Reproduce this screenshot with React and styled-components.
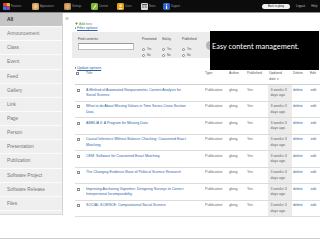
import React from "react";
import styled, { createGlobalStyle } from "styled-components";

const Global = createGlobalStyle`
  html, body { margin: 0; padding: 0; background: #fff; }
  body { width: 320px; height: 240px; overflow: hidden; font-family: "Liberation Sans", Arial, sans-serif; }
  * { box-sizing: border-box; }
`;

const Frame = styled.div`
  position: relative;
  width: 320px;
  height: 239px;
  overflow: hidden;
  background: #fff;
  border-bottom: 1px solid #cfcfcf;
`;

const TopBar = styled.div`
  height: 12px;
  background: #0c0c0c;
  display: flex;
  align-items: center;
  padding-left: 3px;
  padding-right: 0;
`;

const NavItem = styled.div`
  position: relative;
  display: flex;
  align-items: center;
  gap: 1px;
  width: ${(p) => p.$w}px;
  flex: none;
`;

const NavIcon = styled.div`
  width: 7px;
  height: 7px;
  border-radius: 1px;
  flex: none;
  overflow: hidden;
  display: flex;
`;

const NavLabel = styled.span`
  font-size: 2.6px;
  color: #9a9a9a;
  white-space: nowrap;
`;

const Pointer = styled.div`
  position: absolute;
  left: 2px;
  top: 9px;
  width: 0;
  height: 0;
  border-left: 1.5px solid transparent;
  border-right: 1.5px solid transparent;
  border-bottom: 2px solid #fff;
`;

const RightNav = styled.div`
  margin-left: auto;
  display: flex;
  align-items: center;
  gap: 6px;
  width: 58px;
  overflow: hidden;
`;

const BackButton = styled.div`
  width: 28px;
  height: 5px;
  border-radius: 2.5px;
  background: #f2f2f2;
  color: #222;
  font-size: 2.7px;
  display: flex;
  align-items: center;
  justify-content: center;
  white-space: nowrap;
  flex: none;
`;

const TopLink = styled.span`
  font-size: 3px;
  color: #bbb;
  white-space: nowrap;
  flex: none;
`;

const Body = styled.div`
  display: flex;
  height: 205px;
  overflow: hidden;
  border-top: 1px solid #8a8a8a;
`;

const Sidebar = styled.div`
  width: 63px;
  flex: none;
  background: #efefef;
  border-right: 1px solid #d2d2d2;
  height: 202px;
  border-bottom: 1px solid #d8d8d8;
`;

const SideItem = styled.div`
  height: 14.15px;
  display: flex;
  align-items: center;
  padding-left: 7px;
  font-size: 4.8px;
  color: ${(p) => (p.$active ? "#2a2a2a" : "#777")};
  font-weight: ${(p) => (p.$active ? 700 : 400)};
  background: ${(p) => (p.$active ? "#c6c6c6" : "transparent")};
  border-bottom: 1px solid #fbfbfb;
  white-space: nowrap;
`;

const Main = styled.div`
  flex: 1;
  display: flex;
  flex-direction: column;
  padding-left: 2px;
  min-width: 0;
`;

const AddIcon = styled.svg`
  width: 4px;
  height: 4px;
  margin-top: 4px;
  display: block;
`;

const AddNew = styled.div`
  margin-top: 1.5px;
  margin-left: 10px;
  height: 5px;
  display: flex;
  align-items: center;
  gap: 1px;
  font-size: 3.3px;
  color: #4f9b2f;
`;

const Toggle = styled.div`
  margin-left: 10px;
  height: ${(p) => p.$h || 5}px;
  margin-top: ${(p) => p.$mt || 0}px;
  display: flex;
  align-items: center;
  gap: 1px;
  font-size: 3.6px;
  color: #2f5fa6;
  text-decoration: underline;
`;

const Tri = styled.span`
  width: 0;
  height: 0;
  border-top: 1.2px solid transparent;
  border-bottom: 1.2px solid transparent;
  border-left: 1.8px solid #333;
  display: inline-block;
`;

const Panel = styled.div`
  margin-top: 2.5px;
  margin-left: 7px;
  width: 145px;
  height: 31px;
  background: #ececec;
  display: flex;
  padding: 4.5px 0 0 6px;
`;

const FieldCol = styled.div`
  display: flex;
  flex-direction: column;
  width: ${(p) => p.$w}px;
  flex: none;
`;

const FieldLabel = styled.div`
  font-size: 3.3px;
  line-height: 5px;
  height: 5px;
  color: #444;
  white-space: nowrap;
`;

const TextInput = styled.div`
  margin-top: 1.5px;
  width: 56px;
  height: 6.5px;
  background: #fff;
  border: 0.5px solid #bdbdbd;
  border-top: 1px solid #999;
`;

const RadioRow = styled.div`
  display: flex;
  align-items: center;
  gap: 1.5px;
  height: 5px;
  margin-top: ${(p) => p.$mt}px;
  font-size: 2.8px;
  color: #555;
`;

const RadioDot = styled.span`
  width: 3.4px;
  height: 3.4px;
  border-radius: 50%;
  border: 0.5px solid #888;
  background: #fafafa;
  display: inline-block;
`;

const RoundButton = styled.div`
  width: 9px;
  height: 9px;
  border-radius: 50%;
  background: #b5b5b5;
  margin-top: 4.5px;
  margin-left: 4px;
  flex: none;
`;

const Table = styled.div`
  margin-left: 10px;
  width: 245px;
  display: flex;
  flex-direction: column;
`;

const cols = "11px 119px 24px 18px 21px 24px 17px 11px";

const HeadRow = styled.div`
  display: grid;
  grid-template-columns: ${cols};
  height: 15px;
  border-bottom: 1px solid #cfcfcf;
  font-size: 3.4px;
  line-height: 5.5px;
  color: #555;
`;

const Row = styled.div`
  display: grid;
  grid-template-columns: ${cols};
  height: 16.5px;
  flex: none;
  border-bottom: 1px solid #dcdcdc;
  font-size: 3.6px;
  line-height: 5.5px;
  color: #666;
`;

const Cell = styled.div`
  padding-top: ${(p) => (p.$head ? 1 : 2.5)}px;
  padding-left: ${(p) => p.$pl || 0}px;
  color: ${(p) => (p.$link ? "#2f5fa6" : "inherit")};
  background: ${(p) => (p.$sorted ? "#ebebeb" : "transparent")};
  white-space: nowrap;
  overflow: hidden;
`;

const Check = styled.span`
  display: block;
  width: 3px;
  height: 3px;
  margin-top: 1.2px;
  margin-left: ${(p) => p.$ml}px;
  border: 0.5px solid #8c8c8c;
  background: #fff;
`;

const Caption = styled.div`
  position: absolute;
  left: 210px;
  top: 31px;
  width: 109px;
  height: 39px;
  background: #000;
  color: #fff;
  font-family: Lato, "Open Sans", sans-serif;
  font-size: 7.4px;
  line-height: 8px;
  padding: 12px 0 0 2px;
  white-space: nowrap;
`;

const IconFeatures = () => (
  <svg width="7" height="7" viewBox="0 0 7 7">
    <rect width="3.5" height="3.5" fill="#e23b3b" />
    <rect x="3.5" width="3.5" height="3.5" fill="#f2b01e" />
    <rect y="3.5" width="3.5" height="3.5" fill="#3f6fd8" />
    <rect x="3.5" y="3.5" width="3.5" height="3.5" fill="#9b3fbf" />
  </svg>
);
const IconBox = ({ c1, c2 }) => (
  <svg width="7" height="7" viewBox="0 0 7 7">
    <rect width="7" height="7" rx="1" fill={c1} />
    <rect x="1.5" y="1.5" width="4" height="4" fill={c2} />
    <rect x="3" y="0" width="1" height="7" fill={c2} opacity="0.6" />
  </svg>
);
const IconContent = () => (
  <svg width="7" height="7" viewBox="0 0 7 7">
    <rect width="7" height="7" rx="1" fill="#7fb52e" />
    <path d="M2 5.5 L4.8 1.5 L5.5 2 L2.7 6 Z" fill="#fff" />
  </svg>
);
const IconUsers = () => (
  <svg width="7" height="7" viewBox="0 0 7 7">
    <rect width="7" height="7" rx="1" fill="#e2a21c" />
    <circle cx="3.5" cy="2.7" r="1.2" fill="#fff3c0" />
    <path d="M1.5 6 Q3.5 3.5 5.5 6 Z" fill="#fff3c0" />
  </svg>
);
const IconNews = () => (
  <svg width="7" height="7" viewBox="0 0 7 7">
    <rect width="7" height="7" rx="0.5" fill="#d9d9d9" />
    <rect x="1" y="1" width="5" height="1.2" fill="#555" />
    <rect x="1" y="3" width="2.2" height="0.6" fill="#777" />
    <rect x="3.8" y="3" width="2.2" height="0.6" fill="#777" />
    <rect x="1" y="4.4" width="2.2" height="0.6" fill="#777" />
    <rect x="3.8" y="4.4" width="2.2" height="0.6" fill="#777" />
  </svg>
);
const IconSupport = () => (
  <svg width="7" height="7" viewBox="0 0 7 7">
    <rect width="7" height="7" rx="1" fill="#2f62c8" />
    <rect x="3" y="2.8" width="1.1" height="3.2" fill="#fff" />
    <circle cx="3.55" cy="1.7" r="0.65" fill="#fff" />
  </svg>
);

const navs = [
  { label: "Features", w: 29, icon: <IconFeatures /> },
  { label: "Appearance", w: 32, icon: <IconBox c1="#c99a5a" c2="#e8c48c" /> },
  { label: "Settings", w: 27, icon: <IconBox c1="#b98a4e" c2="#d9b07a" /> },
  { label: "Content", w: 26, icon: <IconContent />, active: true },
  { label: "Users", w: 24, icon: <IconUsers /> },
  { label: "News", w: 22, icon: <IconNews /> },
  { label: "Support", w: 24, icon: <IconSupport /> },
];

const sideItems = [
  "All",
  "Announcement",
  "Class",
  "Event",
  "Feed",
  "Gallery",
  "Link",
  "Page",
  "Person",
  "Presentation",
  "Publication",
  "Software Project",
  "Software Release",
  "Files",
];

const rows = [
  ["A Method of Automated Nonparametric Content Analysis for", "Social Science"],
  ["What to do About Missing Values in Time Series Cross-Section", "Data"],
  ["AMELIA II: A Program for Missing Data"],
  ["Causal Inference Without Balance Checking: Coarsened Exact", "Matching"],
  ["CEM: Software for Coarsened Exact Matching"],
  ["The Changing Evidence Base of Political Science Research"],
  ["Improving Anchoring Vignettes: Designing Surveys to Correct", "Interpersonal Incomparability"],
  ["SOCIAL SCIENCE: Computational Social Science"],
];

const Lines = ({ lines }) =>
  lines.map((l, i) => (
    <React.Fragment key={i}>
      {i > 0 && <br />}
      {l}
    </React.Fragment>
  ));

export default function App() {
  return (
    <>
      <Global />
      <Frame>
        <TopBar>
          {navs.map((n) => (
            <NavItem key={n.label} $w={n.w}>
              <NavIcon>{n.icon}</NavIcon>
              <NavLabel>{n.label}</NavLabel>
              {n.active && <Pointer />}
            </NavItem>
          ))}
          <RightNav>
            <BackButton>Back to gking</BackButton>
            <TopLink>Logout</TopLink>
            <TopLink>Help</TopLink>
          </RightNav>
        </TopBar>
        <Body>
          <Sidebar>
            {sideItems.map((s, i) => (
              <SideItem key={s} $active={i === 0}>
                {s}
              </SideItem>
            ))}
          </Sidebar>
          <Main>
            <AddIcon viewBox="0 0 4 4">
              <circle cx="2" cy="2" r="1.7" fill="none" stroke="#999" strokeWidth="0.5" />
              <path d="M2 1 V3 M1 2 H3" stroke="#999" strokeWidth="0.5" />
            </AddIcon>
            <AddNew>
              <svg width="3" height="3" viewBox="0 0 3 3">
                <path d="M1.5 0.3 V2.7 M0.3 1.5 H2.7" stroke="#4f9b2f" strokeWidth="0.8" />
              </svg>
              Add new
            </AddNew>
            <Toggle>
              <Tri />
              Filter options
            </Toggle>
            <Panel>
              <FieldCol $w={64}>
                <FieldLabel>Find contents</FieldLabel>
                <TextInput />
              </FieldCol>
              {["Promoted", "Sticky", "Published"].map((f) => (
                <FieldCol key={f} $w={20}>
                  <FieldLabel>{f}</FieldLabel>
                  <RadioRow $mt={5}>
                    <RadioDot />
                    Yes
                  </RadioRow>
                  <RadioRow $mt={1}>
                    <RadioDot />
                    No
                  </RadioRow>
                </FieldCol>
              ))}
              <RoundButton />
            </Panel>
            <Toggle $mt={8} $h={4.5}>
              <Tri />
              Update options
            </Toggle>
            <Table>
              <HeadRow>
                <Cell $head>
                  <Check $ml={1} />
                </Cell>
                <Cell $head>Title</Cell>
                <Cell $head>Type</Cell>
                <Cell $head>Author</Cell>
                <Cell $head>Published</Cell>
                <Cell $head $pl={1}>
                  Updated
                  <br />
                  date ▾
                </Cell>
                <Cell $head $pl={1}>Delete</Cell>
                <Cell $head $pl={1}>Edit</Cell>
              </HeadRow>
              {rows.map((r, i) => (
                <Row key={i}>
                  <Cell>
                    <Check $ml={2} />
                  </Cell>
                  <Cell $link>
                    <Lines lines={r} />
                  </Cell>
                  <Cell>Publication</Cell>
                  <Cell>gking</Cell>
                  <Cell>Yes</Cell>
                  <Cell $sorted $pl={2.5}>
                    3 weeks 3
                    <br />
                    days ago
                  </Cell>
                  <Cell $link $pl={1}>delete</Cell>
                  <Cell $link $pl={1.5}>edit</Cell>
                </Row>
              ))}
            </Table>
          </Main>
        </Body>
        <Caption>Easy content management.</Caption>
      </Frame>
    </>
  );
}
